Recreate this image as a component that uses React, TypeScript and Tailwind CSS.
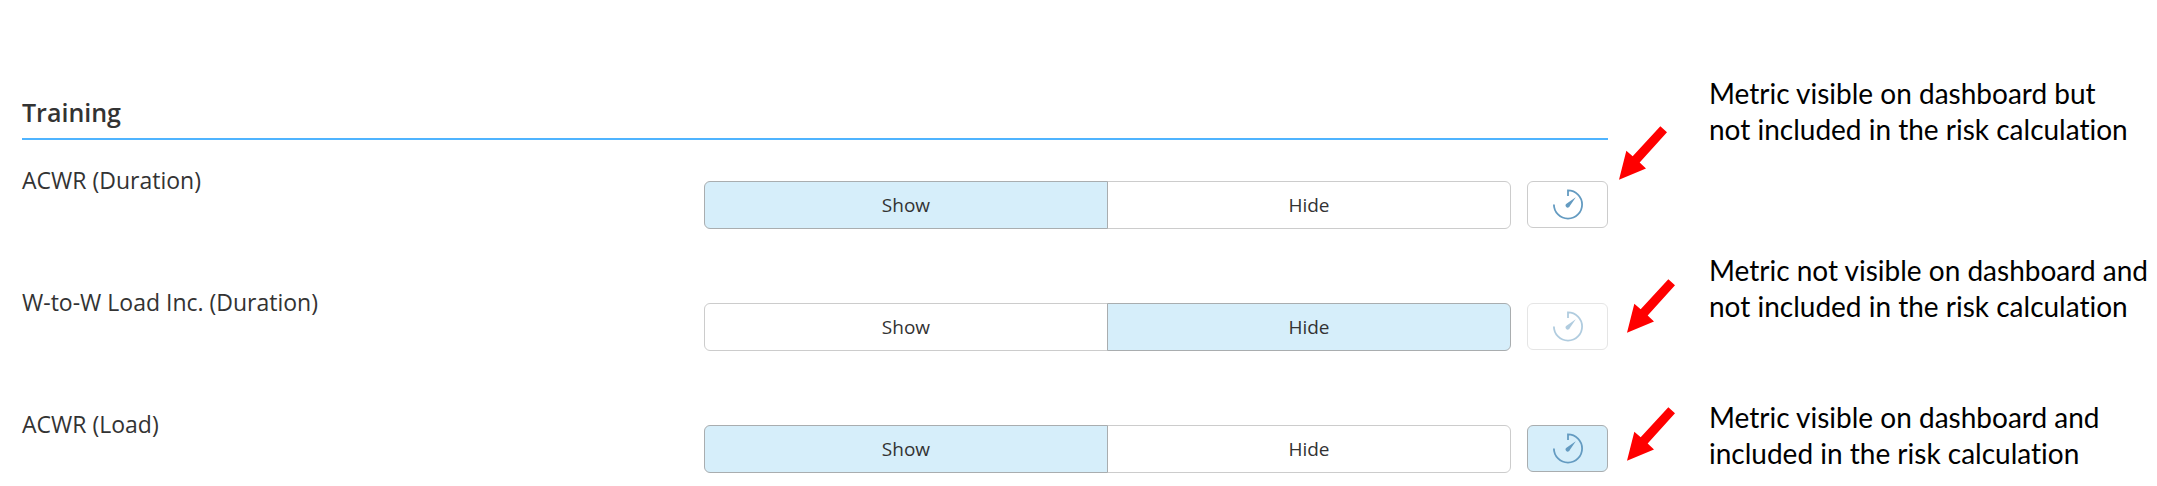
import { useState } from "react";
import clsx from "clsx";

type Metric = {
  name: string;
  visible: boolean;
  inRisk: boolean;
};

const initialMetrics: Metric[] = [
  { name: "ACWR (Duration)", visible: true, inRisk: false },
  { name: "W-to-W Load Inc. (Duration)", visible: false, inRisk: false },
  { name: "ACWR (Load)", visible: true, inRisk: true },
];

function GaugeIcon() {
  return (
    <svg viewBox="0 0 30 31" className="h-[31px] w-[30px]" fill="none" aria-hidden="true">
      <path
        d="M0.9 15.5A14.1 14.1 0 1 0 15 1.4V7"
        stroke="currentColor"
        strokeWidth="1.8"
      />
      <path
        d="M22.8 8.2L16.8 17A2.2 2.2 0 1 1 13.8 14.4Z"
        fill="currentColor"
      />
    </svg>
  );
}

function Arrow({ className }: { className?: string }) {
  return (
    <svg viewBox="0 0 144 161" className={clsx("h-[54px] w-12", className)} aria-hidden="true">
      <path d="M0 161L22 74L41 90L124 0L144 18L62 109L81 127Z" fill="#ff0000" />
    </svg>
  );
}

function MetricRow({
  metric,
  onChange,
}: {
  metric: Metric;
  onChange: (next: Metric) => void;
}) {
  const { name, visible, inRisk } = metric;
  return (
    <div role="group" aria-label={name} className="flex items-start">
      <span className="w-[43%] text-[23px] leading-[30px]">{name}</span>
      <div className="flex flex-1 items-start gap-4 pt-4">
        <div className="flex h-12 flex-1 text-[19px]">
          <button
            type="button"
            aria-pressed={visible}
            onClick={() => onChange({ ...metric, visible: true })}
            className={clsx(
              "flex-1 rounded-l-md border",
              visible
                ? "z-10 border-[#a9adaf] bg-[#d6eefa]"
                : "border-[#cccccc] bg-white"
            )}
          >
            Show
          </button>
          <button
            type="button"
            aria-pressed={!visible}
            onClick={() => onChange({ ...metric, visible: false })}
            className={clsx(
              "-ml-px flex-1 rounded-r-md border",
              visible
                ? "border-[#cccccc] bg-white"
                : "z-10 border-[#a9adaf] bg-[#d6eefa]"
            )}
          >
            Hide
          </button>
        </div>
        <button
          type="button"
          aria-label={`Include ${name} in the risk calculation`}
          aria-pressed={inRisk}
          disabled={!visible}
          onClick={() => onChange({ ...metric, inRisk: !inRisk })}
          className={clsx(
            "flex h-[47px] w-[81px] items-center justify-center rounded-md border text-[#649bc1] disabled:opacity-50",
            inRisk ? "border-[#a9adaf] bg-[#d6eefa]" : "border-[#cccccc] bg-white"
          )}
        >
          <GaugeIcon />
        </button>
      </div>
    </div>
  );
}

export default function App() {
  const [metrics, setMetrics] = useState(initialMetrics);

  const update = (index: number, next: Metric) =>
    setMetrics(metrics.map((m, i) => (i === index ? next : m)));

  return (
    <main className="flex bg-white pl-[22px]">
      <section className="flex-1 pt-24 font-['Open_Sans',sans-serif] text-[#333333]">
        <h2 className="border-b-2 border-[#4fb4ff] pb-2.5 text-[25px] leading-8 font-semibold">
          Training
        </h2>
        <div className="flex flex-col gap-[58px] pt-[25px]">
          {metrics.map((metric, i) => (
            <MetricRow key={metric.name} metric={metric} onChange={(next) => update(i, next)} />
          ))}
        </div>
      </section>

      <aside className="flex w-[549px] shrink-0 pl-[11px] font-['Lato',sans-serif] text-[28px] leading-9 text-black [font-variant-ligatures:none]">
        <div className="flex w-14 flex-col pt-[126px]">
          <Arrow />
          <Arrow className="mt-[99px] self-end" />
          <Arrow className="mt-[74px] self-end" />
        </div>
        <div className="pt-[75px] pl-[34px] whitespace-nowrap">
          <p>
            Metric visible on dashboard but
            <br />
            not included in the risk calculation
          </p>
          <p className="pt-[105px]">
            Metric not visible on dashboard and
            <br />
            not included in the risk calculation
          </p>
          <p className="pt-[75px]">
            Metric visible on dashboard and
            <br />
            included in the risk calculation
          </p>
        </div>
      </aside>
    </main>
  );
}
